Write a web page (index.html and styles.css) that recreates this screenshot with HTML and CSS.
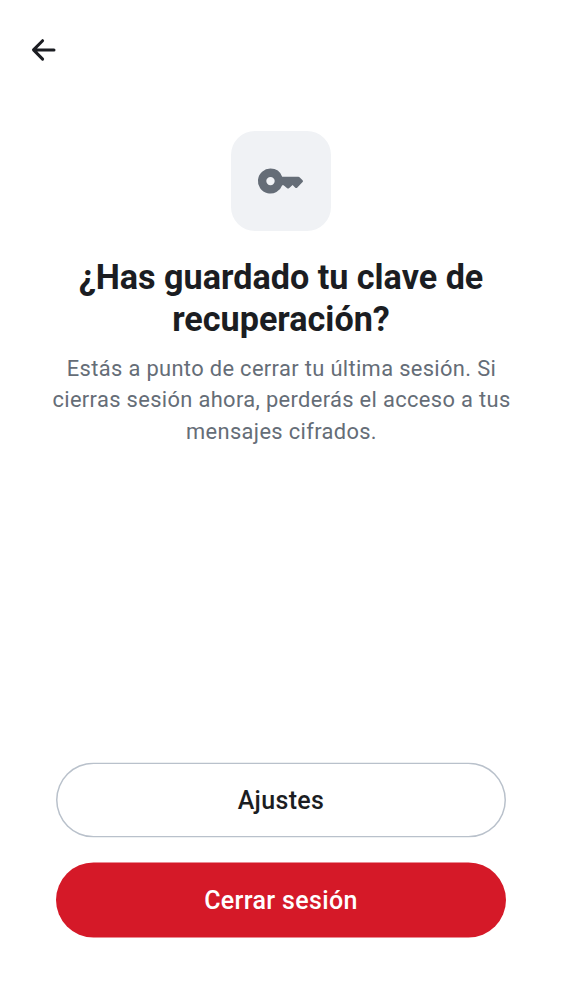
FILE: index.html
```html
<!DOCTYPE html>
<html lang="es">
<head>
<meta charset="utf-8">
<title>Cerrar sesión</title>
<link rel="stylesheet" href="styles.css">
</head>
<body>
<main class="screen">
  <header class="topbar">
    <button class="back" aria-label="Atrás">
      <svg width="30" height="30" viewBox="0 0 30 30" fill="none" stroke="currentColor" stroke-width="3" stroke-linecap="round" stroke-linejoin="round"><path d="M14.6 5.7 5.5 14.9l9.1 9.2M6 14.9H26"/></svg>
    </button>
  </header>
  <section class="content">
    <div class="tile">
      <svg width="50" height="50" viewBox="0 0 50 50" fill="currentColor"><path fill-rule="evenodd" d="M14.5 12.6A12.5 12.5 0 0 1 26.2 20.8H42.3Q43.2 20.8 43.8 21.4L46.6 24.2Q47.5 25.1 46.6 26L41.1 31.7Q40.2 32.5 39.3 31.7L36.6 29 33 32.2Q32.1 32.9 31.2 32.2L27.6 29.2H26.2A12.5 12.5 0 1 1 14.5 12.6ZM14.5 20.9A4.2 4.2 0 1 0 14.5 29.3A4.2 4.2 0 1 0 14.5 20.9Z"/></svg>
    </div>
    <h1 class="title">¿Has guardado tu clave de<br>recuperación?</h1>
    <p class="text">Estás a punto de cerrar tu última sesión. Si<br>cierras sesión ahora, perderás el acceso a tus<br>mensajes cifrados.</p>
  </section>
  <footer class="actions">
    <button class="btn outlined">Ajustes</button>
    <button class="btn danger">Cerrar sesión</button>
  </footer>
</main>
</body>
</html>
```
FILE: styles.css
```css
* { box-sizing: border-box; }
body { margin: 0; background: #fff; font-family: Roboto, sans-serif; }
.screen { height: 1000px; display: flex; flex-direction: column; padding: 35px 28px 62px; }
.topbar { height: 30px; }
.back { display: block; width: 30px; height: 30px; padding: 0; border: 0; background: none; color: #1b1d22; }
.back svg { display: block; }
.content { flex: 1; display: flex; flex-direction: column; align-items: center; padding-top: 66px; text-align: center; }
.tile { width: 100px; height: 100px; border-radius: 24px; background: #f0f2f5; color: #656d77; display: flex; align-items: center; justify-content: center; }
.title { margin: 25px 0 0; font-size: 34.15px; line-height: 42px; font-weight: 700; color: #1b1d22; white-space: nowrap; }
.text { margin: 13px 0 0; padding-left: 1px; font-size: 21.87px; line-height: 31.25px; letter-spacing: .35px; color: #656d77; white-space: nowrap; }
.actions { display: flex; flex-direction: column; gap: 25px; padding: 0 28px; transform: translateY(-.5px); }
.btn { height: 75px; padding: 0 0 1px; border-radius: 38px; border: 0; font: 500 25px Roboto, sans-serif; letter-spacing: .36px; }
.outlined { background: #fff; box-shadow: inset 0 0 0 1.5px #b9c1cb; color: #1b1d22; }
.danger { background: #d51928; color: #fff; }
```
